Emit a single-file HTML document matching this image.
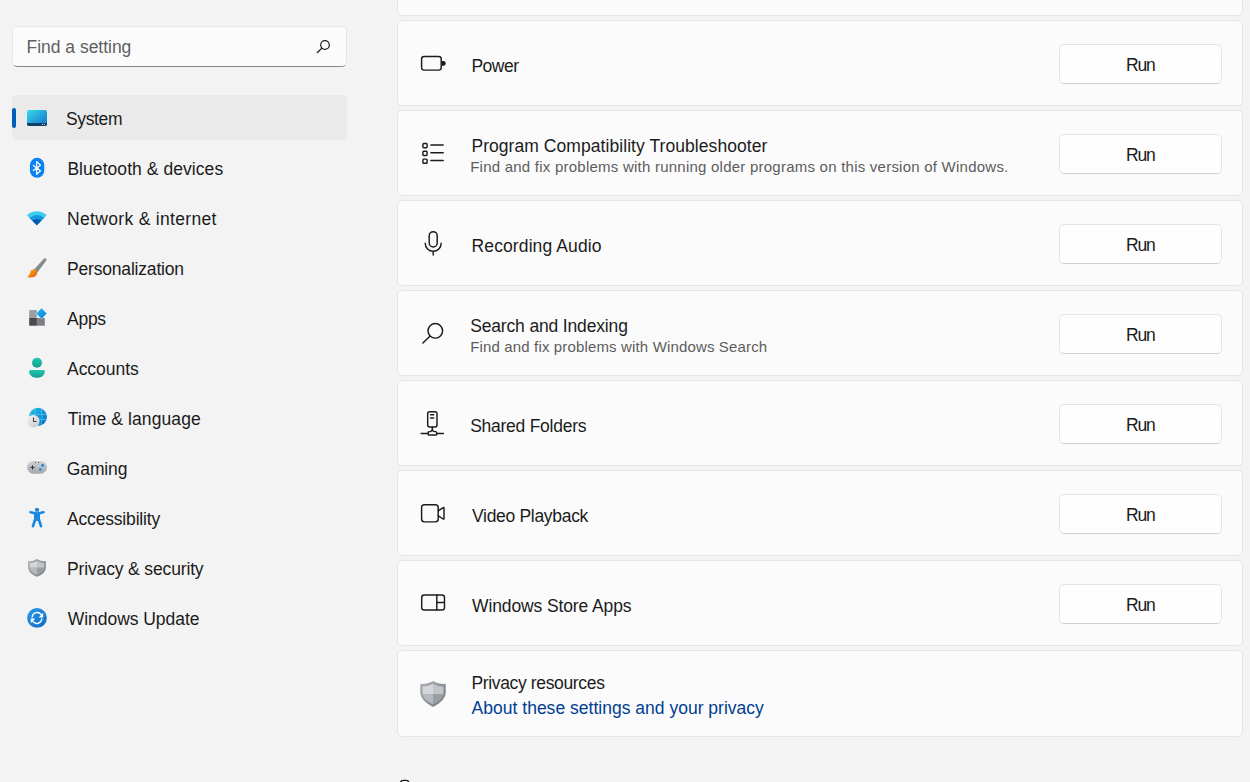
<!DOCTYPE html>
<html><head><meta charset="utf-8">
<style>
html,body{margin:0;padding:0;}
body{width:1250px;height:782px;overflow:hidden;position:relative;background:#f3f3f3;font-family:"Liberation Sans",sans-serif;color:#1b1b1b;}
.a{position:absolute;}
.t{position:absolute;font-size:17.5px;line-height:20px;white-space:nowrap;}
.s{position:absolute;font-size:15px;line-height:20px;white-space:nowrap;color:#5d5d5d;}
#sbox{left:12px;top:26px;width:333px;height:39px;background:#fbfbfb;border:1px solid #e6e6e6;border-bottom:1px solid #8a8a8a;border-radius:5px;}
.sel{left:12px;top:95px;width:335px;height:45px;background:#eaeaea;border-radius:5px;}
.bar{left:12px;top:108px;width:4px;height:20px;background:#005fb8;border-radius:2px;}
.card{position:absolute;left:397px;width:844px;height:84px;background:#fbfbfb;border:1px solid #e5e5e5;border-radius:5px;}
.btn{position:absolute;left:1059px;width:161px;height:38px;background:#fefefe;border:1px solid #e5e5e5;border-bottom-color:#d0d0d0;border-radius:5px;}
.run{position:absolute;left:1126px;font-size:17.5px;line-height:20px;letter-spacing:-1.2px;}
svg{position:absolute;overflow:visible;}
</style></head><body>

<div id="sbox" class="a"></div>
<div id="find" class="t" style="left: 26.60px; top: 37px; color: rgb(95, 95, 95); letter-spacing: -0.026px;">Find a setting</div>

<div class="a sel"></div>
<div class="a bar"></div>

<div id="system" class="t" style="left: 66px; top: 109px; letter-spacing: -0.37px;">System</div>
<div id="bt" class="t" style="left: 67.4px; top: 159px; letter-spacing: 0.059px;">Bluetooth &amp; devices</div>
<div id="net" class="t" style="left: 67px; top: 209px; letter-spacing: 0.325px;">Network &amp; internet</div>
<div id="pers" class="t" style="left: 67px; top: 259px; letter-spacing: -0.186px;">Personalization</div>
<div id="apps" class="t" style="left: 67px; top: 309px; letter-spacing: -0.263px;">Apps</div>
<div id="acc" class="t" style="left: 67px; top: 359px; letter-spacing: -0.025px;">Accounts</div>
<div id="time" class="t" style="left: 67.8px; top: 409px; letter-spacing: 0.09px;">Time &amp; language</div>
<div id="gaming" class="t" style="left: 66.8px; top: 459px; letter-spacing: -0.13px;">Gaming</div>
<div id="access" class="t" style="left: 67px; top: 509px; letter-spacing: -0.173px;">Accessibility</div>
<div id="privsec" class="t" style="left: 67px; top: 559px; letter-spacing: -0.144px;">Privacy &amp; security</div>
<div id="update" class="t" style="left: 67.8px; top: 609px; letter-spacing: -0.05px;">Windows Update</div>

<!-- cards -->
<div class="card" style="top:-70px"></div>
<div class="card" style="top:20px"></div>
<div class="card" style="top:110px"></div>
<div class="card" style="top:200px"></div>
<div class="card" style="top:290px"></div>
<div class="card" style="top:380px"></div>
<div class="card" style="top:470px"></div>
<div class="card" style="top:560px"></div>
<div class="card" style="top:650px;height:85px"></div>

<div class="btn" style="top:44px"></div>
<div class="btn" style="top:134px"></div>
<div class="btn" style="top:224px"></div>
<div class="btn" style="top:314px"></div>
<div class="btn" style="top:404px"></div>
<div class="btn" style="top:494px"></div>
<div class="btn" style="top:584px"></div>

<div class="run" style="top:55px">Run</div>
<div class="run" style="top:145px">Run</div>
<div class="run" style="top:235px">Run</div>
<div class="run" style="top:325px">Run</div>
<div class="run" style="top:415px">Run</div>
<div class="run" style="top:505px">Run</div>
<div class="run" style="top:595px">Run</div>

<div id="power" class="t" style="left: 471.40px; top: 56px; letter-spacing: -0.47px;">Power</div>
<div id="prog" class="t" style="left: 471.40px; top: 136px; letter-spacing: 0.063px;">Program Compatibility Troubleshooter</div>
<div id="progsub" class="s" style="left: 470.2px; top: 157px; letter-spacing: 0.235px;">Find and fix problems with running older programs on this version of Windows.</div>
<div id="rec" class="t" style="left: 471.60px; top: 236px; letter-spacing: 0.103px;">Recording Audio</div>
<div id="search" class="t" style="left: 470.2px; top: 316px; letter-spacing: -0.156px;">Search and Indexing</div>
<div id="searchsub" class="s" style="left: 470.2px; top: 337px; letter-spacing: 0.15px;">Find and fix problems with Windows Search</div>
<div id="shared" class="t" style="left: 470.2px; top: 416px; letter-spacing: -0.259px;">Shared Folders</div>
<div id="video" class="t" style="left: 472px; top: 506px; letter-spacing: -0.305px;">Video Playback</div>
<div id="store" class="t" style="left: 472px; top: 596px; letter-spacing: -0.115px;">Windows Store Apps</div>
<div id="privres" class="t" style="left: 471.40px; top: 673px; letter-spacing: -0.349px;">Privacy resources</div>
<div id="link" class="t" style="left: 471.6px; top: 698px; color: #003e92; letter-spacing: 0.012px;">About these settings and your privacy</div>


<svg style="left:0;top:0" width="1250" height="782" viewBox="0 0 1250 782">
<g fill="none" stroke="#1b1b1b" stroke-width="1.45" stroke-linecap="round" stroke-linejoin="round">
<!-- battery -->
<rect x="421.6" y="56.4" width="19.6" height="13.7" rx="2.6"/>
<!-- list -->
<rect x="422.9" y="143.5" width="4.2" height="4.2" rx="0.9"/>
<rect x="422.9" y="151.3" width="4.2" height="4.2" rx="0.9"/>
<rect x="422.9" y="159.1" width="4.2" height="4.2" rx="0.9"/>
<path d="M430.9 144.9H443.2M430.9 152.7H443.2M430.9 160.5H443.2"/>
<!-- mic -->
<rect x="429.2" y="231.7" width="8" height="15.2" rx="4"/>
<path d="M425.2 243.3A8 8 0 0 0 441.2 243.3M433.2 251.3V255"/>
<!-- search -->
<circle cx="435.3" cy="330.8" r="7.3"/>
<path d="M429.9 336.2L422.9 343.1"/>
<!-- shared -->
<rect x="427.7" y="411.7" width="9.3" height="15.2" rx="2"/>
<path d="M430.6 414.8H433.7M430.6 418H433.7M432.3 427.2V430.1M421.2 433.5H427.5M437 433.5H443.4"/>
<path d="M428.2 432.1Q428.2 431.6 429.6 431.6H430.3Q431 431.6 431.6 430.6L432.3 430L433 430.6Q433.6 431.6 434.3 431.6H435.6Q436.7 431.6 436.7 432.6V434.2Q436.7 435 435.8 435H429Q428.2 435 428.2 434.2Z"/>
<!-- video -->
<rect x="421.6" y="504.8" width="16.6" height="17.1" rx="2.8"/>
<path d="M438.3 510.8L443.2 507.6Q444 507.1 444 508V518.6Q444 519.5 443.2 519L438.3 515.8"/>
<!-- store -->
<rect x="421.7" y="594.9" width="22.8" height="15.1" rx="2.6"/>
<path d="M436.8 595V610M436.8 602.5H444.4"/>
</g>
<path d="M441.9 61.1H443.4A2.3 2.3 0 0 1 443.4 65.7H441.9Z" fill="#1b1b1b"/>
</svg>

<svg style="left:0;top:0" width="1250" height="782" viewBox="0 0 1250 782">
<defs>
<linearGradient id="gSys" x1="0" y1="0" x2="1" y2="1"><stop offset="0" stop-color="#36dbe6"/><stop offset="1" stop-color="#1470cc"/></linearGradient>
<linearGradient id="gBrush" x1="0" y1="0" x2="1" y2="1"><stop offset="0" stop-color="#b4b9bd"/><stop offset="1" stop-color="#5a6066"/></linearGradient>
<linearGradient id="gTip" x1="0" y1="0" x2="1" y2="1"><stop offset="0" stop-color="#ffb51c"/><stop offset="1" stop-color="#e8520e"/></linearGradient>
<linearGradient id="gAcc" x1="0" y1="0" x2="0" y2="1"><stop offset="0" stop-color="#22c9b0"/><stop offset="1" stop-color="#0f9e8b"/></linearGradient>
<linearGradient id="gGlobe" x1="0" y1="0" x2="1" y2="1"><stop offset="0" stop-color="#28c6e6"/><stop offset="1" stop-color="#0a64c8"/></linearGradient>
<linearGradient id="gClock" x1="0" y1="0" x2="1" y2="1"><stop offset="0" stop-color="#f7f7f7"/><stop offset="1" stop-color="#c4c6c8"/></linearGradient>
<linearGradient id="gPad" x1="0" y1="0" x2="0" y2="1"><stop offset="0" stop-color="#d0d4d8"/><stop offset="1" stop-color="#a2a7ac"/></linearGradient>
<linearGradient id="gShL" x1="0" y1="0" x2="1" y2="1"><stop offset="0" stop-color="#b0b4b9"/><stop offset="1" stop-color="#72777d"/></linearGradient>
<linearGradient id="gUpd" x1="0" y1="0" x2="1" y2="1"><stop offset="0" stop-color="#2b98e6"/><stop offset="1" stop-color="#0f6cc4"/></linearGradient>
<linearGradient id="gDia" x1="0" y1="0" x2="1" y2="1"><stop offset="0" stop-color="#22c4f6"/><stop offset="1" stop-color="#0a72dc"/></linearGradient>
</defs>
<!-- System -->
<rect x="27" y="110" width="20" height="16" rx="2" fill="url(#gSys)"/>
<path d="M27 123H47V124Q47 126 45 126H29Q27 126 27 124Z" fill="#0e3f66"/>
<circle cx="42.4" cy="124.4" r="0.65" fill="#b5dcef"/><circle cx="44.4" cy="124.4" r="0.65" fill="#b5dcef"/>
<!-- Bluetooth -->
<rect x="29.9" y="157.8" width="14.4" height="20" rx="7.2" fill="#0a82f4"/>
<path d="M33.4 165.4L40.5 170.8L36.6 174.3V161.5L40.5 165.2L33.4 170.6" fill="none" stroke="#fff" stroke-width="1.2" stroke-linejoin="round" stroke-linecap="round"/>
<!-- Wifi -->
<path d="M36.8 225.2L26.90 215.30A14 14 0 0 1 46.70 215.30Z" fill="#3ccdf2"/>
<path d="M36.8 225.2L29.52 217.92A10.3 10.3 0 0 1 44.08 217.92Z" fill="#1796e0"/>
<path d="M36.8 225.2L32.35 220.75A6.3 6.3 0 0 1 41.25 220.75Z" fill="#0c58a6"/>
<!-- Personalization -->
<path d="M44 258.5Q45.8 257.6 46.5 259.4Q46.4 260.4 45.6 261.4L37.3 272.6L33.4 270Z" fill="url(#gBrush)"/>
<path d="M33.2 269.6Q36.6 269.2 37.2 272.4Q37.2 276.4 32.2 277.4Q29.6 277.9 27.3 277Q29.3 275.6 29.9 273.2Q30.6 269.9 33.2 269.6Z" fill="url(#gTip)"/>
<!-- Apps -->
<rect x="29.2" y="310.1" width="7.7" height="7.9" fill="#9b9ea2"/>
<rect x="29.2" y="318" width="7.7" height="7.7" fill="#48494c"/>
<rect x="36.9" y="318" width="7.9" height="7.7" fill="#7c7f84"/>
<path d="M41.5 308.2L46.8 313.5L41.5 318.8L36.2 313.5Z" fill="#f3f3f3" stroke="#f3f3f3" stroke-width="0.8"/>
<path d="M41.5 308.3L46.7 313.5L41.5 318.7L36.3 313.5Z" fill="url(#gDia)"/>
<!-- Accounts -->
<circle cx="37" cy="362.8" r="5" fill="url(#gAcc)"/>
<path d="M29 371.4Q29 369.9 30.5 369.9H43.4Q44.9 369.9 44.9 371.4Q44.9 374.6 42.2 376.5Q40 377.8 37 377.8Q34 377.8 31.8 376.5Q29 374.6 29 371.4Z" fill="url(#gAcc)"/>
<!-- Time -->
<circle cx="38" cy="416.8" r="9" fill="url(#gGlobe)"/>
<path d="M29.3 414.4H46.7M29.3 419.4H46.7" stroke="#45d3f0" stroke-width="0.9" fill="none" opacity="0.75"/>
<path d="M35.6 408.2Q33.4 416.8 35.6 425.4M41 408.2Q43 416.8 41 425.4" stroke="#45d3f0" stroke-width="0.9" fill="none" opacity="0.75"/>
<circle cx="33.3" cy="421.2" r="6.3" fill="url(#gClock)"/>
<path d="M33.5 417.5V421.5H36.6" stroke="#474747" stroke-width="1.1" fill="none"/>
<!-- Gaming -->
<rect x="27" y="460.9" width="20" height="12.8" rx="6.4" fill="url(#gPad)"/>
<path d="M30.4 467.4H34.6M32.5 465.3V469.5" stroke="#2e3033" stroke-width="1" fill="none"/>
<circle cx="42.6" cy="465.4" r="1.3" fill="#1f7ee0"/><circle cx="40.3" cy="469.5" r="1.3" fill="#1f7ee0"/>
<circle cx="35.5" cy="462.5" r="0.5" fill="#333"/><circle cx="38.5" cy="462.5" r="0.5" fill="#333"/>
<!-- Accessibility -->
<circle cx="37" cy="509.9" r="2.15" fill="#1a88e0"/>
<path d="M30.4 512.2Q37 514.6 43.6 512.2" stroke="#1a88e0" stroke-width="2.5" stroke-linecap="round" fill="none"/>
<path d="M34 513.6H40V521H34Z" fill="#1a88e0"/>
<path d="M35 520L33 526.2M39 520L41 526.2" stroke="#1a88e0" stroke-width="2.7" stroke-linecap="round" fill="none"/>
<!-- Privacy -->
<path d="M37 559Q41 561.4 45.9 561.2V567.4Q45.9 573.2 37 576.8Q28.1 573.2 28.1 567.4V561.2Q33 561.4 37 559Z" fill="url(#gShL)"/>
<path d="M37 561Q40.6 563 44.3 562.9V567.8H37Z" fill="#c2c6cb"/>
<path d="M37 561V567.8H29.7V562.9Q33.4 563 37 561Z" fill="#d3d6da"/>
<path d="M29.7 567.8H37V575Q29.8 572 29.7 567.8Z" fill="#b6babf"/>
<path d="M37 567.8H44.3Q44.2 572 37 575Z" fill="#9a9fa5"/>
<!-- Windows Update -->
<circle cx="37" cy="617.9" r="9.9" fill="url(#gUpd)"/>
<path d="M32.2 617A5 5 0 0 1 41.2 614.6M41.8 619A5 5 0 0 1 32.8 621.4" stroke="#fff" stroke-width="1.3" fill="none" stroke-linecap="round"/>
<path d="M43.2 612.8V617.4H38.6Z" fill="#fff"/><path d="M30.8 623.1V618.5H35.4Z" fill="#fff"/>
<!-- help icon top -->
<rect x="400.4" y="780.4" width="8.6" height="9" rx="3" fill="none" stroke="#1b1b1b" stroke-width="1.4"/>
<!-- search box icon -->
<circle cx="325" cy="45" r="4.3" fill="none" stroke="#1b1b1b" stroke-width="1.2"/>
<path d="M321.9 48.1L317.4 52.5" stroke="#1b1b1b" stroke-width="1.3" stroke-linecap="round"/>
<!-- card privacy shield -->
<path d="M433 681Q438.4 684.3 445.8 684V692.6Q445.8 700.6 433 707Q420.2 700.6 420.2 692.6V684Q427.6 684.3 433 681Z" fill="url(#gShL)"/>
<path d="M433 683.7V694H422.6V686.4Q428.4 686.6 433 683.7Z" fill="#d3d6da"/>
<path d="M433 683.7Q437.6 686.6 443.4 686.4V694H433Z" fill="#c2c6cb"/>
<path d="M422.6 694H433V704.3Q422.7 699.8 422.6 694Z" fill="#b6babf"/>
<path d="M433 694H443.4Q443.3 699.8 433 704.3Z" fill="#9a9fa5"/>
</svg>
</body></html>
